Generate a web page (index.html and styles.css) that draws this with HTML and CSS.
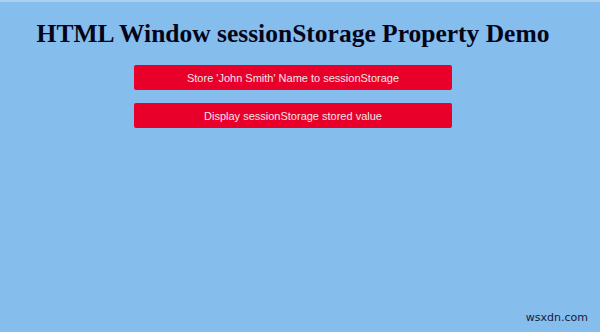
FILE: index.html
```html
<!DOCTYPE html>
<html lang="en">

<head>
    <meta charset="UTF-8">
    <meta name="viewport" content="width=device-width, initial-scale=1.0">
    <title>sessionStorage Demo</title>
    <link rel="stylesheet" href="styles.css">
</head>

<body>
    <div class="page">
        <h1 class="title">HTML Window sessionStorage Property Demo</h1>
        <div class="btn-list">
            <div class="btn">Store 'John Smith' Name to sessionStorage</div>
            <div class="btn">Display sessionStorage stored value</div>
        </div>
        <div class="mark">wsxdn.com</div>
    </div>
</body>

</html>
```

FILE: styles.css
```css
body {
    margin: 0px;
    padding: 0px;
}

.page {
    position: relative;
    width: 100%;
    height: 100vh;
    padding-right: 14px;
    background-color: #85bdec;
    border-top: 2px solid #a9d0ef;
    box-sizing: border-box;
    display: flex;
    flex-direction: column;
    align-items: center;
}

.title {
    margin: 17px 0px 0px 0px;
    font-family: "Liberation Serif", serif;
    font-size: 25.5px;
    font-weight: bold;
    color: #05051a;
    line-height: 30px;
}

.btn-list {
    display: flex;
    flex-direction: column;
    gap: 13px;
    margin-top: 16px;
}

.btn {
    width: 318px;
    height: 25px;
    background-color: #e8002a;
    border-radius: 2px;
    color: #f4e6ea;
    font-family: "Liberation Sans", Arial, sans-serif;
    font-size: 11px;
    display: flex;
    justify-content: center;
    align-items: center;
}

.mark {
    position: absolute;
    right: 12px;
    bottom: 8px;
    font-family: "DejaVu Sans", sans-serif;
    font-size: 11px;
    color: #14203a;
}
```
